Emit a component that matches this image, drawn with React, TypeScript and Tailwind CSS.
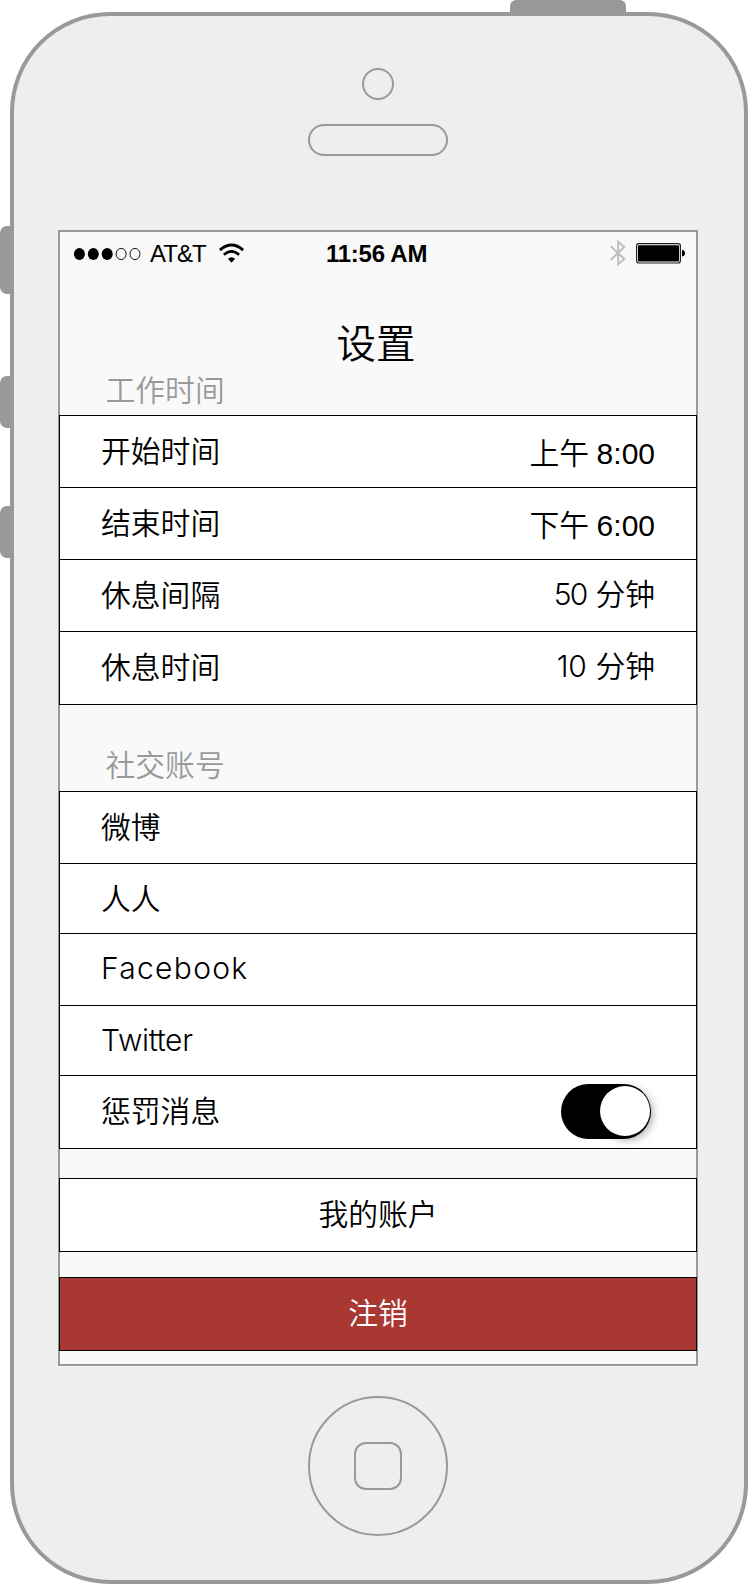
import type { ReactNode } from "react";

const cjk = "font-['Noto_Sans_CJK_SC',sans-serif] font-[350]";
const geometric = "font-['Inter','Noto_Sans_CJK_SC',sans-serif] font-[350]";
const helvetica = "font-['Liberation_Sans',Arial,sans-serif]";

function StatusBar() {
  return (
    <div className={`flex h-[42px] w-[636px] items-start bg-[#f8f8f8] text-black ${helvetica}`}>
      <svg className="ml-[13px] mt-[15px] h-[14px] w-[68px] shrink-0" viewBox="0 0 68 14">
        {[6.4, 20.3, 34.2].map((x) => (
          <ellipse key={x} cx={x} cy="7" rx="5.5" ry="6" />
        ))}
        {[48.1, 62].map((x) => (
          <ellipse key={x} cx={x} cy="7" rx="5" ry="5.6" fill="none" stroke="#000" strokeWidth="0.9" />
        ))}
      </svg>
      <span className="ml-[9px] mt-[7px] w-[60px] text-[24px] leading-[30px] tracking-[-1px]">AT&amp;T</span>
      <svg className="ml-[9px] mt-[11px] h-[21px] w-[25px] shrink-0" viewBox="0 0 26 22" fill="none" stroke="#000">
        <path d="M0.8 7.4 Q13 -3.2 25.2 7.4" strokeWidth="3" />
        <path d="M5 12.4 Q13 5.2 21 12.4" strokeWidth="2.8" />
        <path d="M9.2 16.6 Q13 13.2 16.8 16.6 L13 20.6 Z" fill="#000" stroke="none" />
      </svg>
      <span className="ml-[82px] mt-[7px] w-[110px] whitespace-nowrap text-[24px] font-bold leading-[30px] tracking-[-0.25px]">11:56 AM</span>
      <svg className="ml-[173.5px] mt-[8px] h-[26px] w-[16px] shrink-0" viewBox="0 0 16 26" fill="none" stroke="#bdbdbd" strokeWidth="1.9">
        <path d="M0.6 6 L14.2 19 L8.2 24.3 V1.7 L14.2 7 L0.6 20" />
      </svg>
      <svg className="ml-[10.5px] mt-[11px] h-[21px] w-[50px] shrink-0" viewBox="0 0 50 21">
        <rect x="0.6" y="0.6" width="43.8" height="19.4" rx="2.2" fill="#f8f8f8" stroke="#222" strokeWidth="1.2" />
        <rect x="2" y="2.2" width="41" height="16.4" rx="0.8" />
        <path d="M46 7 Q49 7.2 49 10.3 Q49 13.4 46 13.6 Z" />
      </svg>
    </div>
  );
}

function Row({ label, size, children }: { label: ReactNode; size: string; children?: ReactNode }) {
  return (
    <div className={`flex justify-between pl-[41px] pr-[41px] ${size}`}>
      <div className="pt-[11px]">{label}</div>
      {children}
    </div>
  );
}

function Text({ children }: { children: ReactNode }) {
  return <span className={`block whitespace-nowrap text-[29.8px] leading-[44px] ${cjk}`}>{children}</span>;
}

function Latin({ children, tracking }: { children: ReactNode; tracking: string }) {
  return <span className={`mt-px block text-[30px] leading-[44px] ${tracking} ${geometric}`}>{children}</span>;
}

function Clock({ period, time }: { period: string; time: string }) {
  return (
    <div className="flex items-baseline gap-[7.5px] pt-[13px]">
      <Text>{period}</Text>
      <span className={`text-[30px] leading-[44px] ${helvetica}`}>{time}</span>
    </div>
  );
}

function Minutes({ value, tracking }: { value: string; tracking: string }) {
  return (
    <div className="flex items-baseline gap-[9px] pt-[10px]">
      <span className={`text-[30px] leading-[44px] ${tracking} ${geometric}`}>{value}</span>
      <Text>分钟</Text>
    </div>
  );
}

function Toggle() {
  return (
    <div className="mr-[4px] mt-[8px] flex h-[55px] w-[90px] items-start justify-end rounded-full bg-black pr-[1.5px] pt-[2px]">
      <div className="h-[49.5px] w-[49.5px] rounded-full bg-white shadow-[2px_3px_10px_rgba(0,0,0,0.4)]" />
    </div>
  );
}

function SectionTitle({ children }: { children: ReactNode }) {
  return (
    <h2 className={`pl-[45.5px] text-[29.8px] leading-[44px] text-[#999999] ${cjk}`}>{children}</h2>
  );
}

export default function App() {
  return (
    <div className="flex h-[1588px] w-[752px] flex-col overflow-hidden bg-white text-black">
      <div className="ml-[510px] h-[12px] w-[116px] shrink-0 rounded-t-[6px] bg-[#999999]" />
      <div className="flex">
        <div className="flex w-[10px] shrink-0 flex-col pt-[214px]">
          <div className="h-[68px] rounded-l-[7px] bg-[#999999]" />
          <div className="mt-[82px] h-[52px] rounded-l-[7px] bg-[#999999]" />
          <div className="mt-[78px] h-[52px] rounded-l-[7px] bg-[#999999]" />
        </div>
        <div className="flex h-[1572px] w-[738px] shrink-0 flex-col items-center rounded-[100px] border-4 border-[#999999] bg-[#eeeeee] pr-[2px]">
          <div className="mt-[52px] h-[32px] w-[32px] shrink-0 rounded-full border-2 border-[#999999]" />
          <div className="mt-[24px] h-[32px] w-[140px] shrink-0 rounded-full border-2 border-[#999999]" />

          <main className="mt-[74px] h-[1136px] w-[640px] shrink-0 border-2 border-[#999999] bg-[#f9f9f9] shadow-[0_1px_0_#fafafa]">
            <StatusBar />
            <h1 className={`mt-[39px] h-[56px] pr-[4px] text-center text-[39.5px] leading-[56px] ${cjk}`}>设置</h1>
            <div className="-mt-[3px] h-[49px]">
              <SectionTitle>工作时间</SectionTitle>
            </div>

            <section className="-mx-px divide-y divide-black border border-black bg-white">
              <Row size="h-[72px]" label={<Text>开始时间</Text>}><Clock period="上午" time="8:00" /></Row>
              <Row size="h-[72px]" label={<Text>结束时间</Text>}><Clock period="下午" time="6:00" /></Row>
              <Row size="h-[72px]" label={<Text>休息间隔</Text>}><Minutes value="50" tracking="tracking-[-1.8px]" /></Row>
              <Row size="h-[72px]" label={<Text>休息时间</Text>}><Minutes value="10" tracking="tracking-[-0.4px]" /></Row>
            </section>

            <div className="h-[86px] pt-[36px]">
              <SectionTitle>社交账号</SectionTitle>
            </div>

            <section className="-mx-px divide-y divide-black border border-black bg-white">
              <Row size="h-[72px]" label={<Text>微博</Text>} />
              <Row size="h-[70px]" label={<Text>人人</Text>} />
              <Row size="h-[72px]" label={<Latin tracking="tracking-[1.3px]">Facebook</Latin>} />
              <Row size="h-[70px]" label={<Latin tracking="tracking-[-0.3px]">Twitter</Latin>} />
              <Row size="h-[72px]" label={<Text>惩罚消息</Text>}><Toggle /></Row>
            </section>

            <button className="-mx-px mt-[29px] flex h-[74px] w-[638px] justify-center border border-black bg-white pt-[11px]">
              <Text>我的账户</Text>
            </button>
            <button className="-mx-px mt-[25px] flex h-[74px] w-[638px] justify-center border border-black bg-[#a93732] pt-[11px] text-white">
              <Text>注销</Text>
            </button>
          </main>

          <div className="mt-[30px] flex h-[140px] w-[140px] shrink-0 items-center justify-center rounded-full border-2 border-[#999999]">
            <div className="h-[48px] w-[48px] rounded-[12px] border-2 border-[#999999]" />
          </div>
        </div>
      </div>
    </div>
  );
}
